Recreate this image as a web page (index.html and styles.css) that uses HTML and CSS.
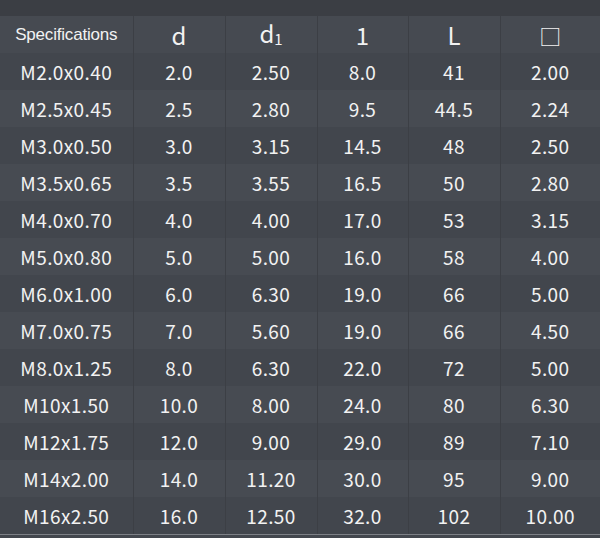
FILE: index.html
```html
<!DOCTYPE html>
<html>
<head>
<meta charset="utf-8">
<link rel="stylesheet" href="styles.css">
</head>
<body>
<div class="topbar"></div>
<table class="spec">
  <colgroup>
    <col class="c1"><col class="c2"><col class="c3"><col class="c4"><col class="c5"><col class="c6">
  </colgroup>
  <thead>
    <tr>
      <th class="spec-h">Specifications</th>
      <th>d</th>
      <th>d<span class="sub">1</span></th>
      <th>1</th>
      <th>L</th>
      <th class="sq">□</th>
    </tr>
  </thead>
  <tbody>
    <tr><td>M2.0x0.40</td><td>2.0</td><td>2.50</td><td>8.0</td><td>41</td><td>2.00</td></tr>
    <tr><td>M2.5x0.45</td><td>2.5</td><td>2.80</td><td>9.5</td><td>44.5</td><td>2.24</td></tr>
    <tr><td>M3.0x0.50</td><td>3.0</td><td>3.15</td><td>14.5</td><td>48</td><td>2.50</td></tr>
    <tr><td>M3.5x0.65</td><td>3.5</td><td>3.55</td><td>16.5</td><td>50</td><td>2.80</td></tr>
    <tr><td>M4.0x0.70</td><td>4.0</td><td>4.00</td><td>17.0</td><td>53</td><td>3.15</td></tr>
    <tr><td>M5.0x0.80</td><td>5.0</td><td>5.00</td><td>16.0</td><td>58</td><td>4.00</td></tr>
    <tr><td>M6.0x1.00</td><td>6.0</td><td>6.30</td><td>19.0</td><td>66</td><td>5.00</td></tr>
    <tr><td>M7.0x0.75</td><td>7.0</td><td>5.60</td><td>19.0</td><td>66</td><td>4.50</td></tr>
    <tr><td>M8.0x1.25</td><td>8.0</td><td>6.30</td><td>22.0</td><td>72</td><td>5.00</td></tr>
    <tr><td>M10x1.50</td><td>10.0</td><td>8.00</td><td>24.0</td><td>80</td><td>6.30</td></tr>
    <tr><td>M12x1.75</td><td>12.0</td><td>9.00</td><td>29.0</td><td>89</td><td>7.10</td></tr>
    <tr><td>M14x2.00</td><td>14.0</td><td>11.20</td><td>30.0</td><td>95</td><td>9.00</td></tr>
    <tr><td>M16x2.50</td><td>16.0</td><td>12.50</td><td>32.0</td><td>102</td><td>10.00</td></tr>
  </tbody>
</table>
<div class="bottomline"></div>
</body>
</html>
```
FILE: styles.css
```css
html, body {
  margin: 0;
  padding: 0;
  background: #43474e;
  width: 600px;
  height: 538px;
  overflow: hidden;
}
.topbar {
  height: 16px;
  background: #3b3e44;
}
.spec {
  border-collapse: collapse;
  table-layout: fixed;
  width: 600px;
  color: #f2f2f2;
  font-family: "Noto Sans CJK SC", "Noto Sans", sans-serif;
}
.c1 { width: 133px; }
.c2 { width: 92px; }
.c3 { width: 92px; }
.c4 { width: 91px; }
.c5 { width: 92px; }
.c6 { width: 100px; }
.spec tr {
  height: 37px;
}
.spec th, .spec td {
  padding: 0;
  text-align: center;
  vertical-align: middle;
  border-left: 1px solid #3c3f45;
  line-height: 20px;
  white-space: nowrap;
}
.spec th:first-child, .spec td:first-child {
  border-left: none;
}
.spec thead tr {
  background: #464a51;
}
.spec th {
  font-weight: 400;
  font-size: 24px;
}
.spec th.spec-h {
  font-family: "Liberation Sans", Arial, sans-serif;
  font-size: 17px;
  letter-spacing: -0.2px;
}
.spec th .sub {
  font-size: 15px;
  vertical-align: -2px;
  line-height: 1;
}
.spec th.sq {
  font-size: 22px;
}
.spec td {
  font-size: 19px;
  letter-spacing: 0.4px;
}
.spec tbody tr:nth-child(odd) {
  background: #42464d;
}
.spec tbody tr:nth-child(even) {
  background: #474b52;
}
.bottomline {
  height: 1px;
  background: #7d8086;
}
```
